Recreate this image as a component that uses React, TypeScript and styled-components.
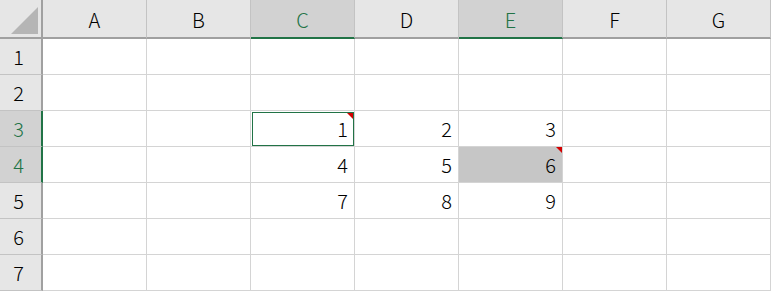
import React from "react";
import styled, { createGlobalStyle, css } from "styled-components";

const Global = createGlobalStyle`
  html, body { margin: 0; padding: 0; background: #fff; }
  body { font-family: "Noto Sans CJK JP", "Noto Sans", sans-serif; }
`;

const COLS = ["A", "B", "C", "D", "E", "F", "G"];
const SEL_COLS = ["C", "E"];
const SEL_ROWS = [3, 4];

const data: Record<string, string> = {
  C3: "1", D3: "2", E3: "3",
  C4: "4", D4: "5", E4: "6",
  C5: "7", D5: "8", E5: "9",
};

const Sheet = styled.div`
  display: grid;
  grid-template-columns: 43px repeat(7, 104px);
  grid-template-rows: 39px repeat(7, 36px);
  width: 771px;
  overflow: hidden;
  font-size: 20px;
  font-weight: 300;
  color: #000;
`;

const Corner = styled.div`
  position: relative;
  background: #e6e6e6;
  border-right: 2px solid #a0a0a0;
  border-bottom: 2px solid #a0a0a0;
  box-sizing: border-box;
  &::after {
    content: "";
    position: absolute;
    right: 3px;
    bottom: 3px;
    width: 0;
    height: 0;
    border-left: 27px solid transparent;
    border-bottom: 27px solid #b5b5b5;
  }
`;

const ColHead = styled.div<{ $sel: boolean }>`
  box-sizing: border-box;
  display: flex;
  align-items: center;
  justify-content: center;
  background: ${(p) => (p.$sel ? "#d2d2d2" : "#e6e6e6")};
  color: ${(p) => (p.$sel ? "#217346" : "#000")};
  border-right: 1px solid #c3c3c3;
  border-bottom: 2px solid ${(p) => (p.$sel ? "#217346" : "#a0a0a0")};
  padding-top: 2px;
`;

const RowHead = styled.div<{ $sel: boolean }>`
  box-sizing: border-box;
  display: flex;
  align-items: center;
  justify-content: center;
  background: ${(p) => (p.$sel ? "#d2d2d2" : "#e6e6e6")};
  color: ${(p) => (p.$sel ? "#217346" : "#000")};
  border-right: 2px solid ${(p) => (p.$sel ? "#217346" : "#a0a0a0")};
  border-bottom: 1px solid #c3c3c3;
  padding-right: 4px;
`;

const Cell = styled.div<{ $active?: boolean; $filled?: boolean; $note?: boolean }>`
  position: relative;
  box-sizing: border-box;
  display: flex;
  align-items: center;
  justify-content: flex-end;
  padding-right: 6px;
  border-right: 1px solid #d4d4d4;
  border-bottom: 1px solid #d4d4d4;
  background: ${(p) => (p.$filled ? "#c6c6c6" : "#fff")};
  ${(p) =>
    p.$active &&
    css`
      &::before {
        content: "";
        position: absolute;
        left: 1px;
        top: 1px;
        right: 0;
        bottom: 0;
        border: 1px solid #217346;
        pointer-events: none;
      }
    `}
  ${(p) =>
    p.$note &&
    css`
      &::after {
        content: "";
        position: absolute;
        top: ${p.$active ? 2 : 0}px;
        right: ${p.$active ? 1 : 0}px;
        width: 0;
        height: 0;
        border-left: 6px solid transparent;
        border-top: 6px solid #d40000;
      }
    `}
`;

const Value = styled.span`
  position: relative;
  z-index: 1;
`;

export default function App() {
  return (
    <>
      <Global />
      <Sheet>
        <Corner />
        {COLS.map((c) => (
          <ColHead key={c} $sel={SEL_COLS.includes(c)}>
            {c}
          </ColHead>
        ))}
        {[1, 2, 3, 4, 5, 6, 7].map((r) => (
          <React.Fragment key={r}>
            <RowHead $sel={SEL_ROWS.includes(r)}>{r}</RowHead>
            {COLS.map((c) => {
              const id = `${c}${r}`;
              return (
                <Cell
                  key={id}
                  $active={id === "C3"}
                  $filled={id === "E4"}
                  $note={id === "C3" || id === "E4"}
                >
                  {data[id] && <Value>{data[id]}</Value>}
                </Cell>
              );
            })}
          </React.Fragment>
        ))}
      </Sheet>
    </>
  );
}
